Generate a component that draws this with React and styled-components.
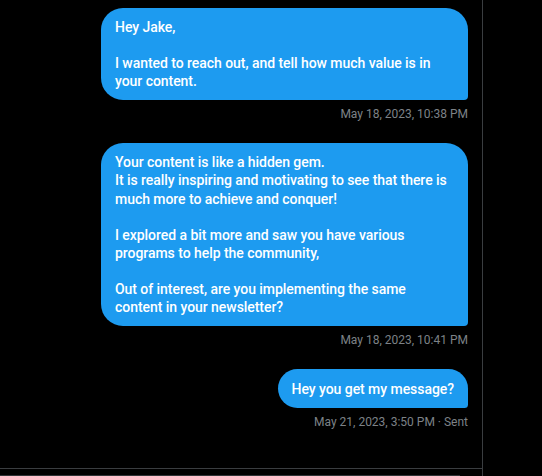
import React from 'react';
import styled, { createGlobalStyle } from 'styled-components';

const GlobalStyle = createGlobalStyle`
    html, body {
        margin: 0;
        padding: 0;
        background: #000;
    }

    body {
        font-family: Roboto, "Noto Sans", sans-serif;
        -webkit-font-smoothing: antialiased;
    }
`;

const Page = styled.div`
    width: 542px;
    height: 476px;
    overflow: hidden;
    display: flex;
    background: #000;
`;

const Conversation = styled.div`
    width: 482px;
    flex-shrink: 0;
    display: flex;
    flex-direction: column;
    border-right: 1px solid #3a3d40;
`;

const MessageList = styled.div`
    flex-shrink: 0;
    height: 460px;
    padding: 8px 14px 0 0;
    display: flex;
    flex-direction: column;
    align-items: flex-end;
    border-bottom: 1px solid #3a3d40;
`;

const MessageGroup = styled.div`
    display: flex;
    flex-direction: column;
    align-items: flex-end;
    margin-bottom: 21px;
`;

const Bubble = styled.div`
    box-sizing: border-box;
    width: ${props => props.$wide ? '367px' : 'auto'};
    padding: ${props => props.$wide ? '10px 14px' : '10.5px 14px 10.5px 14px'};
    background: #1d9bf0;
    color: #fff;
    font-size: 14px;
    font-weight: 500;
    letter-spacing: -0.05px;
    line-height: 18.1px;
    white-space: pre;
    border-radius: 22px 22px 4px 22px;
`;

const Timestamp = styled.div`
    margin-top: 6px;
    font-size: 12px;
    line-height: 16px;
    color: #7d8287;
    white-space: nowrap;
`;

const Composer = styled.div`
    flex-shrink: 0;
    width: 460px;
    height: 10px;
    margin-top: 6px;
    border-top: 1px solid #2f3336;
`;

const messages = [
    {
        text: 'Hey Jake,\n\nI wanted to reach out, and tell how much value is in\nyour content.',
        time: 'May 18, 2023, 10:38 PM',
        wide: true
    },
    {
        text: 'Your content is like a hidden gem.\nIt is really inspiring and motivating to see that there is\nmuch more to achieve and conquer!\n\nI explored a bit more and saw you have various\nprograms to help the community,\n\nOut of interest, are you implementing the same\ncontent in your newsletter?',
        time: 'May 18, 2023, 10:41 PM',
        wide: true
    },
    {
        text: 'Hey you get my message?',
        time: 'May 21, 2023, 3:50 PM · Sent',
        wide: false
    }
];

export default function App() {

    return (

        <Page>

            <GlobalStyle/>

            <Conversation>

                <MessageList>

                    {messages.map(message => (
                        <MessageGroup key={message.time}>
                            <Bubble $wide={message.wide}>{message.text}</Bubble>
                            <Timestamp>{message.time}</Timestamp>
                        </MessageGroup>
                    ))}

                </MessageList>

                <Composer/>

            </Conversation>

        </Page>

    )

};
